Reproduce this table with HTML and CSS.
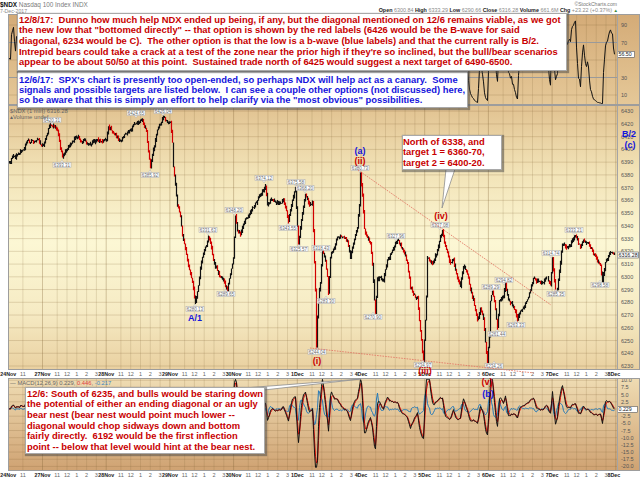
FILE: index.html
```html
<!DOCTYPE html>
<html lang="en">
<head>
<meta charset="utf-8">
<title>$NDX Nasdaq 100 Index</title>
<link rel="stylesheet" href="styles.css">
</head>
<body>
<div class="page">
  <header class="hdr">
    <div class="hdr-left">
      <div class="title"><b>$NDX</b> Nasdaq 100 Index INDX</div>
      <div class="date">7-Dec-2017</div>
    </div>
    <div class="hdr-right">
      <div class="brand">©StockCharts.com</div>
      <div class="quote"><b>Open</b> 6300.84 <b>High</b> 6333.29 <b>Low</b> 6290.66 <b>Close</b> 6316.28 <b>Volume</b> 661.6M <b>Chg</b> +23.22 (+0.37%) <span class="up">▲</span></div>
    </div>
  </header>
  <main class="chart">
    <div class="panel p-rsi"><svg id="rsi" width="632" height="91" viewBox="8 14 632 91"></svg></div>
    <div class="panel p-price"><svg id="price" width="632" height="265" viewBox="8 105 632 265"></svg></div>
    <div class="strip"><svg id="ax1" width="640" height="8" viewBox="0 370 640 8"></svg></div>
    <div class="panel p-macd"><svg id="macd" width="632" height="93" viewBox="8 378 632 93"></svg></div>
    <div class="strip"><svg id="ax2" width="640" height="8" viewBox="0 471 640 8"></svg></div>
  </main>

  <svg class="marks" width="640" height="479" viewBox="0 0 640 479">
    <line class="trend" x1="358" y1="170" x2="551" y2="305"/>
    <line class="trend" x1="310" y1="348" x2="534" y2="373"/>
    <polygon class="ptr" points="446,169 455,169 442,208"/>
    <polygon class="ptr" points="244,388 264,390 361,379"/>
  </svg>

  <div class="note n-red1">
    <span class="ln">12/8/17:&nbsp; Dunno how much help NDX ended up being, if any, but the diagonal mentioned on 12/6 remains viable, as we got</span>
    <span class="ln">the new low that "bottomed directly" -- that option is shown by the red labels (6426 would be the B-wave for said</span>
    <span class="ln">diagonal, 6234 would be C).&nbsp; The other option is that the low is a b-wave (blue labels) and that the current rally is B/2.</span>
    <span class="ln">Intrepid bears could take a crack at a test of the zone near the prior high if they're so inclined, but the bull/bear scenarios</span>
    <span class="ln">appear to be about 50/50 at this point.&nbsp; Sustained trade north of 6425 would suggest a next target of 6490-6500.</span>
  </div>
  <div class="note n-blue1">
    <span class="ln">12/6/17:&nbsp; SPX's chart is presently too open-ended, so perhaps NDX will help act as a canary.&nbsp; Some</span>
    <span class="ln">signals and possible targets are listed below.&nbsp; I can see a couple other options (not discussed) here,</span>
    <span class="ln">so be aware that this is simply an effort to help clarify via the "most obvious" possibilities.</span>
  </div>
  <div class="note n-north">
    <span class="ln">North of 6338, and</span>
    <span class="ln">target 1 = 6360-70,</span>
    <span class="ln">target 2 = 6400-20.</span>
  </div>
  <div class="note n-south">
    <span class="ln">12/6: South of 6235, and bulls would be staring down</span>
    <span class="ln">the potential of either an ending diagonal or an ugly</span>
    <span class="ln">bear nest (bear nest would point much lower --</span>
    <span class="ln">diagonal would chop sidways down and bottom</span>
    <span class="ln">fairly directly.&nbsp; 6192 would be the first inflection</span>
    <span class="ln">point -- below that level would hint at the bear nest.</span>
  </div>

  <span class="wl blue w-a1">A/1</span>
  <span class="wl blue w-a">(a)</span>
  <span class="wl red w-ii">(ii)</span>
  <span class="wl red w-iv">(iv)</span>
  <span class="wl blue w-b2">B/2</span>
  <span class="wl blue w-c">(c)</span>
  <span class="wl red w-i">(i)</span>
  <span class="wl red w-iii">(iii)</span>
  <span class="wl red w-v">(v)</span>
  <span class="wl blue w-b">(b)</span>
</div>
<script src="chart.js"></script>
</body>
</html>
```

FILE: styles.css
```css
* { box-sizing: border-box; margin: 0; padding: 0; }
html, body { width: 640px; height: 479px; overflow: hidden; background: #fff; }
body { font-family: "Liberation Sans", Arial, sans-serif; }

.page { position: relative; width: 640px; height: 479px; display: flex; flex-direction: column; }

.hdr { height: 14px; display: flex; justify-content: space-between; align-items: flex-start; }
.hdr-left { display: flex; flex-direction: column; padding-top: 1px; }
.title { font-size: 6.4px; line-height: 7px; color: #7a7a7a; }
.title b { color: #111; }
.date { font-size: 5.2px; line-height: 6px; color: #8a8a8a; }
.hdr-right { display: flex; flex-direction: column; align-items: flex-end; padding-right: 22px; }
.brand { font-size: 5.1px; line-height: 6px; padding-top: 1px; color: #777; margin-right: 1px; }
.quote { font-size: 5.4px; line-height: 6px; color: #8a8a8a; white-space: nowrap; }
.quote b { color: #222; }
.quote .up { color: #3a8a3a; font-size: 4.5px; }

.chart { display: flex; flex-direction: column; flex: 1; }
.panel { margin-left: 8px; width: 632px; }
.panel svg, .strip svg { display: block; }
.p-rsi { height: 91px; background: linear-gradient(#d4ab77, #e5c898); }
.p-price { height: 265px; background: linear-gradient(#e1c290 0%, #f2e3b7 25%, #fcf7d4 52%, #f6ebc4 78%, #e9d0a0 100%); }
.p-macd { height: 93px; background: linear-gradient(#efdcb3, #cfa272); }
.strip { height: 8px; background: #fff; }

/* svg parts */
.gd { stroke: rgba(130, 100, 55, .33); stroke-width: 1; }
.gh { stroke: rgba(130, 100, 55, .18); stroke-width: 1; }
.hg { stroke: rgba(130, 100, 55, .22); stroke-width: 1; }
.hk { stroke: #9a9a9a; stroke-width: 1; }
.frame { fill: none; stroke: #9d9d9d; stroke-width: 1; }
.sep { stroke: #a5a5a5; stroke-width: 1; }
.bar-b { fill: none; stroke: #111; stroke-width: 1.2; }
.bar-r { fill: none; stroke: #d20000; stroke-width: 1.2; }
.rsi-l { fill: none; stroke: #111; stroke-width: 1; }
.macd-l { fill: none; stroke: #111; stroke-width: 1; }
.sig-l { fill: none; stroke: #e00000; stroke-width: 1; }
.hist-l { fill: none; stroke: #2479b8; stroke-width: 1; }
.ax { font: 5.5px "Liberation Sans", Arial, sans-serif; fill: #555; }
.axh { font: 5.5px "Liberation Sans", Arial, sans-serif; fill: #666; }
.axd { font: bold 5.3px "Liberation Sans", Arial, sans-serif; fill: #222; }
.leg { font: 5.8px "Liberation Sans", Arial, sans-serif; fill: #666; }
.leg-r { fill: #e04040; }
.leg-b { fill: #3a86c0; }
.vbox { fill: #fff; stroke: #555; stroke-width: .6; }
.vtxt { font: 5.3px "Liberation Sans", Arial, sans-serif; fill: #222; }
.tag rect { fill: #fff; stroke: #a5a5a5; stroke-width: .5; }
.tag path { fill: #fff; stroke: #a5a5a5; stroke-width: .5; }
.tag text { font: 4.5px "Liberation Sans", Arial, sans-serif; fill: #666; }

/* overlay */
.marks { position: absolute; left: 0; top: 0; pointer-events: none; z-index: 1; }
.trend { stroke: #e27a68; stroke-width: .9; stroke-dasharray: 1.6 1.1; }
.ptr { fill: #fff; stroke: #8e8e8e; stroke-width: .8; }

.note {
  position: absolute; z-index: 2;
  background: #fff; border: 1px solid #a9a9a9;
  box-shadow: 1px 1px 1px 1px rgba(70, 70, 70, .5);
  font-weight: bold; font-size: 9.4px; line-height: 10.7px;
  white-space: nowrap; display: flex; flex-direction: column;
}
.ln { display: block; }
.n-red1 { left: 17px; top: 13px; width: 550px; height: 58px; padding: .6px 1px 0; color: #c80000; z-index: 3; }
.n-blue1 { left: 17px; top: 71px; width: 451px; height: 37px; padding: 2.6px 1px 0; line-height: 10.4px; color: #1414dc; }
.n-north { left: 402px; top: 135px; width: 100px; height: 35px; padding: .7px 0 0; line-height: 10.5px; color: #c80000; }
.n-south { left: 25px; top: 387px; width: 240px; height: 67px; padding: .6px 1px 0; color: #c80000; }

.wl { position: absolute; z-index: 4; font-weight: bold; font-size: 9px; line-height: 10px; transform: translate(-50%, -50%); white-space: nowrap; }
.red { color: #c80000; }
.blue { color: #1414dc; }
.w-a1 { left: 195px; top: 318px; }
.w-a { left: 360px; top: 151px; }
.w-ii { left: 360px; top: 161px; }
.w-iv { left: 441px; top: 216px; }
.w-b2 { left: 629px; top: 134px; }
.w-c { left: 630px; top: 145px; }
.w-i { left: 317px; top: 361px; }
.w-iii { left: 425px; top: 371px; }
.w-v { left: 487px; top: 382px; }
.w-b { left: 488px; top: 394px; }
```

FILE: chart.js
```js
(function () {
  var NS = 'http://www.w3.org/2000/svg';
  function el(t, a, p) { var e = document.createElementNS(NS, t); for (var k in a) e.setAttribute(k, a[k]); if (p) p.appendChild(e); return e; }
  function tx(p, x, y, s, c, an) { var t = el('text', { x: x, y: y, 'class': c }, p); if (an) t.setAttribute('text-anchor', an); t.textContent = s; return t; }
  var seed = 20171208;
  function rnd() { seed |= 0; seed = seed + 0x6D2B79F5 | 0; var t = Math.imul(seed ^ seed >>> 15, 1 | seed); t = t + Math.imul(t ^ t >>> 7, 61 | t) ^ t; return ((t ^ t >>> 14) >>> 0) / 4294967296; }

  var XL = 8, XR = 617, H = 63.7 / 6.5;
  var marks = [], s24 = 42.5 - 3.5 * H;
  marks.push([s24, '24Nov', 1], [s24 + 1.5 * H, '11', 0]);
  var days = ['27Nov', '28Nov', '29Nov', '30Nov', '1Dec', '4Dec', '5Dec', '6Dec', '7Dec', '8Dec'], hrs = ['11', '12', '1', '2', '3'];
  days.forEach(function (d, i) { var x0 = 42.5 + 63.7 * i; marks.push([x0, d, 1]); if (i < 9) hrs.forEach(function (h, j) { marks.push([x0 + (1.5 + j) * H, h, 0]); }); });

  function grid(svg, y1, y2, hs) {
    var g = el('g', {}, svg);
    marks.forEach(function (m) { if (m[0] > XL + 1 && m[0] < XR - 1) el('line', { x1: m[0], x2: m[0], y1: y1, y2: y2, 'class': m[2] ? 'gd' : 'gh' }, g); });
    hs.forEach(function (h) { el('line', { x1: XL, x2: XR, y1: h[0], y2: h[0], 'class': h[1] || 'hg' }, g); });
  }
  function frame(svg, y1, y2) {
    el('line', { x1: XR + .5, x2: XR + .5, y1: y1, y2: y2, 'class': 'sep' }, svg);
    el('rect', { x: XL + .5, y: y1 + .5, width: 631, height: y2 - y1 - 1, 'class': 'frame' }, svg);
  }
  function vbox(svg, y, w, t) { el('rect', { x: 617.5, y: y - 3, width: w, height: 6, 'class': 'vbox' }, svg); tx(svg, 618.5, y + 1.9, t, 'vtxt'); }

  /* synthetic price path through traced waypoints (page coords) */
  var WP = [[8,162],[12,158],[17,155],[22,150],[27,140],[35,141],[43,146],[46,135],[50,124],[55,127],[58,135],[62,157],[66,150],[70,145],[77,137],[84,140],[90,143],[98,141],[106,140],[108,126],[112,132],[120,140],[127,133],[133,125],[138,123],[142,119],[146,132],[150,167],[153,150],[157,130],[163,117],[167,122],[170,123],[172,143],[173,168],[175,185],[177,205],[180,215],[182,235],[185,248],[188,265],[192,283],[195,302],[198,285],[200,267],[204,250],[208,236],[211,248],[213,260],[217,270],[220,277],[224,282],[227,290],[230,275],[233,258],[235,216],[237,230],[240,235],[243,225],[247,217],[250,212],[253,207],[258,198],[263,190],[265,185],[267,205],[272,198],[278,203],[283,200],[286,210],[288,222],[291,205],[295,188],[298,245],[301,220],[305,195],[309,205],[312,202],[313,230],[315,290],[316,348],[317,317],[318,300],[320,283],[322,251],[325,262],[327,277],[328,293],[330,257],[337,237],[342,236],[347,240],[350,257],[354,240],[357,227],[359,205],[360,172],[362,195],[364,228],[368,240],[370,243],[372,263],[374,300],[375,313],[377,277],[380,278],[383,280],[387,260],[392,250],[397,240],[400,245],[403,250],[407,263],[410,287],[414,295],[417,297],[420,330],[423,361],[425,320],[426,295],[427,257],[430,262],[433,263],[438,247],[442,231],[445,247],[450,263],[453,260],[457,277],[460,287],[463,267],[467,273],[470,290],[473,300],[477,320],[480,310],[483,320],[487,361],[489,335],[490,300],[492,290],[494,300],[497,328],[499,300],[503,297],[505,283],[508,300],[513,307],[517,320],[520,312],[523,307],[527,300],[530,290],[533,277],[540,283],[547,277],[550,285],[552,258],[555,292],[557,290],[560,263],[562,243],[567,247],[573,240],[575,235],[580,247],[583,240],[587,243],[590,247],[593,253],[597,262],[600,265],[602,281],[605,263],[610,253],[614,255]];
  function baseY(x) {
    for (var i = 1; i < WP.length; i++) if (x <= WP[i][0]) { var a = WP[i - 1], b = WP[i], t = (x - a[0]) / ((b[0] - a[0]) || 1); return a[1] + (b[1] - a[1]) * t; }
    return WP[WP.length - 1][1];
  }
  function nearW(x) { var d = 99; for (var i = 0; i < WP.length; i++) d = Math.min(d, Math.abs(WP[i][0] - x)); return Math.min(1, d / 2.5); }
  var C = [], n = 0, x;
  for (x = 8; x <= 614; x++) { n = n * .5 + (rnd() - .5) * 4.6; C.push(baseY(x) + n * (.35 + .65 * nearW(x))); }

  /* ---------- RSI panel ---------- */
  var rsi = document.getElementById('rsi');
  var ry = function (v) { return 95 - (v - 10) * .875; };
  grid(rsi, 14, 105, [[ry(90)], [ry(70), 'hk'], [ry(50)], [ry(30), 'hk'], [ry(10)]]);
  var ag = 1, al = 1, P = 4, R = [], i;
  for (i = 0; i < C.length; i++) {
    var ch = i ? (C[i - 1] - C[i]) : 0;
    ag = (ag * (P - 1) + Math.max(ch, 0)) / P; al = (al * (P - 1) + Math.max(-ch, 0)) / P;
    R.push(100 - 100 / (1 + ag / (al || 1e-6)));
  }
  var rp = '';
  for (i = 0; i < R.length; i++) rp += (i ? 'L' : 'M') + (8.5 + i) + ' ' + ry(R[i]).toFixed(1);
  el('path', { d: rp, 'class': 'rsi-l' }, rsi);
  [90, 70, 30, 10].forEach(function (v) { tx(rsi, 621, ry(v) + 2, String(v), 'ax'); });
  vbox(rsi, ry(R[R.length - 1]), 17, R[R.length - 1].toFixed(2));
  frame(rsi, 14, 105);

  /* ---------- price panel ---------- */
  var pr = document.getElementById('price');
  var py = function (p) { return 366 - (p - 6230) * 1.274; };
  var hl = [], p;
  for (p = 6230; p <= 6430; p += 10) hl.push([py(p)]);
  grid(pr, 105, 370, hl);
  var pb = '', pd = '';
  for (i = 0; i < C.length; i++) {
    var y0 = i ? C[i - 1] : C[i], y1 = C[i];
    var top = Math.min(y0, y1) - rnd() * 2.2, bot = Math.max(y0, y1) + rnd() * 2.2;
    var d = 'M' + (8.5 + i) + ' ' + top.toFixed(1) + 'V' + bot.toFixed(1);
    if (y1 - y0 > 1.1 && rnd() < .85) pd += d; else pb += d;
  }
  el('path', { d: pb, 'class': 'bar-b' }, pr);
  el('path', { d: pd, 'class': 'bar-r' }, pr);

  var tags = [[52,120,'6420.31',1],[136,113,'6424.65',1],[163,111,'6426.04',1],[62,165,'6393.31',0],[150,175,'6385.92',0],[195,309,'6280.13',0],[208,230,'6331.63',1],[226,294,'6289.65',0],[234,210,'6348.20',1],[264,178,'6374.12',1],[288,228,'6343.55',0],[296,182,'6375.58',1],[305,188,'6368.20',1],[299,249,'6325.57',0],[317,352,'6244.04',0],[321,248,'6318.43',1],[326,301,'6283.30',0],[360,168,'6380.73',1],[373,317,'6270.90',0],[396,236,'6327.96',1],[423,365,'6234.97',0],[440,225,'6337.08',1],[491,287,'6289.29',1],[504,280,'6294.82',1],[494,366,'6234.26',0],[497,334,'6261.44',0],[516,325,'6263.33',0],[556,294,'6285.35',0],[551,253,'6314.74',1],[574,230,'6333.21',1],[600,285,'6298.58',0]];
  var tg = el('g', { 'class': 'tag' }, pr);
  tags.forEach(function (t) {
    var cx = t[0], cy = t[1], w = 18, h = 5;
    var e = t[3] ? cy + h / 2 : cy - h / 2, s = t[3] ? 1 : -1;
    el('path', { d: 'M' + (cx - 1.6) + ' ' + e + 'L' + cx + ' ' + (e + s * 2.2) + 'L' + (cx + 1.6) + ' ' + e + 'Z' }, tg);
    el('rect', { x: cx - w / 2, y: cy - h / 2, width: w, height: h }, tg);
    tx(tg, cx, cy + 1.6, t[2], '', 'middle');
  });
  for (p = 6230; p <= 6430; p += 10) tx(pr, 621, py(p) + 2, String(p), 'ax');
  vbox(pr, 255, 21, '6316.28');
  tx(pr, 10, 112.5, '$NDX (1 min) 6316.28', 'leg');
  tx(pr, 10, 119, '\u25B4Volume undef', 'leg');
  frame(pr, 105, 370);

  /* ---------- MACD panel ---------- */
  var mc = document.getElementById('macd');
  var my = function (v) { return 409 - v * 2.87; };
  var mh = [], v;
  for (v = 10; v >= -20; v -= 2.5) mh.push([my(v)]);
  grid(mc, 378, 471, mh);
  var ef = null, es = null, sg = null, M = [], S = [], HI = [];
  for (i = 0; i < C.length; i++) {
    p = 6230 + (366 - C[i]) / 1.274;
    if (ef === null) { ef = es = p; }
    ef += (p - ef) * .667; es += (p - es) * .375;
    var m = Math.max(-20.3, Math.min(10.3, (ef - es) * 1.15));
    if (sg === null) sg = m;
    sg += (m - sg) * .6;
    M.push(m); S.push(sg); HI.push((m - sg) * 1.3);
  }
  function line(arr, cls) { var s = ''; for (var k = 0; k < arr.length; k++) s += (k ? 'L' : 'M') + (8.5 + k) + ' ' + my(arr[k]).toFixed(1); el('path', { d: s, 'class': cls }, mc); }
  line(HI, 'hist-l'); line(S, 'sig-l'); line(M, 'macd-l');
  for (v = 10; v >= -20; v -= 2.5) if (v !== 0) tx(mc, 621, my(v) + 2, v.toFixed(1), 'ax');
  vbox(mc, 409.5, 20, '0.229');
  var lg = tx(mc, 10, 385, '', 'leg');
  [['\u2014 MACD(12,26,9) 0.229, ', ''], ['0.446', 'leg-r'], [', ', ''], ['-0.217', 'leg-b']].forEach(function (s) { var t = el('tspan', s[1] ? { 'class': s[1] } : {}, lg); t.textContent = s[0]; });
  frame(mc, 378, 471);

  /* ---------- date strips ---------- */
  function strip(svg, y) {
    marks.forEach(function (m) { var last = m[1] === '8Dec'; tx(svg, last ? 607.6 : m[0], y + 6.2, m[1], m[2] ? 'axd' : 'axh', last ? 'start' : 'middle'); });
  }
  strip(document.getElementById('ax1'), 370);
  strip(document.getElementById('ax2'), 471);
})();
```
